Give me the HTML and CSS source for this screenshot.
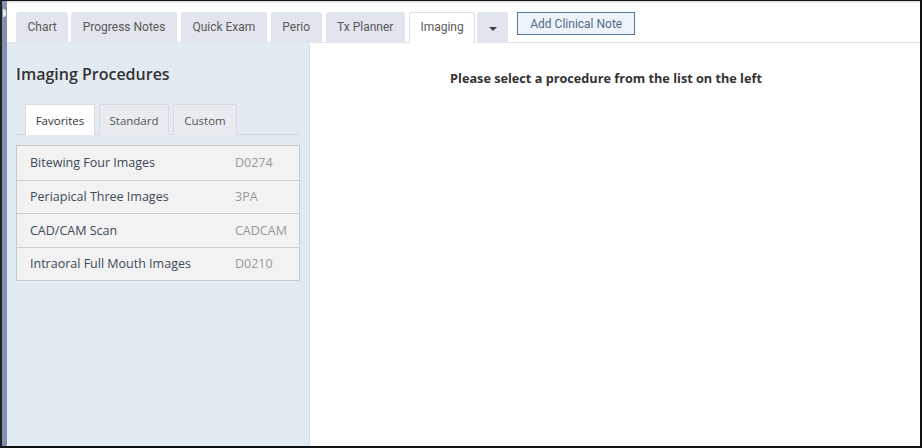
FILE: index.html
```html
<!DOCTYPE html>
<html lang="en">
<head>
    <meta charset="UTF-8">
    <title>Imaging</title>
    <link rel="stylesheet" href="styles.css">
</head>
<body>
    <div class="frame">
        <div class="side-strip"><span class="strip-handle"></span></div>
        <div class="main">
            <div class="tab-bar">
                <div class="tab">Chart</div>
                <div class="tab">Progress Notes</div>
                <div class="tab">Quick Exam</div>
                <div class="tab">Perio</div>
                <div class="tab">Tx Planner</div>
                <div class="tab active">Imaging</div>
                <div class="tab more"><span class="caret"></span></div>
                <button class="note-btn">Add Clinical Note</button>
            </div>
            <div class="content">
                <div class="sidebar">
                    <h2>Imaging Procedures</h2>
                    <div class="sub-tabs">
                        <div class="sub-tab active">Favorites</div>
                        <div class="sub-tab">Standard</div>
                        <div class="sub-tab narrow">Custom</div>
                    </div>
                    <div class="proc-list">
                        <div class="proc"><span>Bitewing Four Images</span><span class="code">D0274</span></div>
                        <div class="proc"><span>Periapical Three Images</span><span class="code">3PA</span></div>
                        <div class="proc"><span>CAD/CAM Scan</span><span class="code">CADCAM</span></div>
                        <div class="proc"><span>Intraoral Full Mouth Images</span><span class="code">D0210</span></div>
                    </div>
                </div>
                <div class="detail">
                    <p class="hint">Please select a procedure from the list on the left</p>
                </div>
            </div>
        </div>
    </div>
</body>
</html>
```

FILE: styles.css
```css
* {
    margin: 0;
    padding: 0;
    box-sizing: border-box;
}

body {
    background: white;
    font-family: 'Open Sans', sans-serif;
    color: #333;
}

.frame {
    display: flex;
    width: 922px;
    height: 448px;
    border-top: 1px solid #111;
    border-right: 2px solid #111;
    border-bottom: 2px solid #111;
    border-left: 2px solid #222;
}

.side-strip {
    width: 5px;
    background: #8291ab;
    position: relative;
}

.strip-handle {
    position: absolute;
    top: 8px;
    left: 1px;
    width: 3px;
    height: 8px;
    background: #e8ecf2;
    border-radius: 0 3px 3px 0;
}

.main {
    flex: 1;
    display: flex;
    flex-direction: column;
    border-top: 2px solid #e6e6e6;
}

/* Top tabs */
.tab-bar {
    display: flex;
    align-items: flex-start;
    gap: 4px;
    padding: 9px 0 0 9px;
    height: 40px;
    border-bottom: 1px solid #e2e2ee;
    font-family: Roboto, sans-serif;
    font-size: 12px;
}

.tab {
    height: 30px;
    line-height: 30px;
    padding: 0 11.5px;
    background: #e1e5ed;
    color: #5a5a5a;
    border-radius: 3px 3px 0 0;
}

.tab:first-child {
    margin-right: -1px;
}

.tab.active {
    background: white;
    border: 1px solid #dcdfe6;
    border-bottom: none;
    height: 31px;
    line-height: 29px;
    padding: 0 10.5px;
}

.tab.more {
    margin-left: -2px;
    width: 31px;
    padding: 0;
    position: relative;
}

.caret {
    position: absolute;
    left: 12px;
    top: 15px;
    border-left: 4px solid transparent;
    border-right: 4px solid transparent;
    border-top: 4px solid #444;
}

.note-btn {
    margin-left: 5px;
    height: 23px;
    width: 118px;
    background: #eef3fa;
    border: 1px solid #4d7c9c;
    color: #4f6b88;
    font-family: Roboto, sans-serif;
    font-size: 12px;
}

/* Content area */
.content {
    flex: 1;
    display: flex;
}

.sidebar {
    width: 303px;
    background: #e3ebf2;
    border-right: 1px solid #d5dce3;
    padding: 0 9px;
}

.sidebar h2 {
    font-size: 16px;
    font-weight: 600;
    color: #333;
    margin: 20px 0 19px;
}

.sub-tabs {
    display: flex;
    gap: 4px;
    padding-left: 9px;
    border-bottom: 1px solid #d3d8de;
    width: 284px;
    font-size: 11.5px;
}

.sub-tab {
    width: 70px;
    text-align: center;
    height: 31px;
    line-height: 31px;
    background: #e8ecf1;
    border: 1px solid #d6dbe1;
    border-bottom: none;
    color: #555;
    margin-bottom: -1px;
}

.sub-tab.narrow {
    width: 64px;
}

.sub-tab.active {
    background: white;
    color: #333;
}

.proc-list {
    margin-top: 10px;
    width: 284px;
    background: #f2f2f2;
    border: 1px solid #c9c9cc;
    font-size: 12.5px;
}

.proc {
    display: grid;
    grid-template-columns: 1fr 64px;
    height: 33.5px;
    align-items: center;
    padding-left: 13px;
    color: #3c4a5a;
    border-top: 1px solid #d0d0d4;
}

.proc:first-child {
    border-top: none;
}

.proc .code {
    color: #999;
}

.detail {
    flex: 1;
    text-align: center;
    padding-top: 26px;
}

.hint {
    font-size: 12.7px;
    font-weight: 700;
    color: #333;
    margin-left: -18px;
}
```
